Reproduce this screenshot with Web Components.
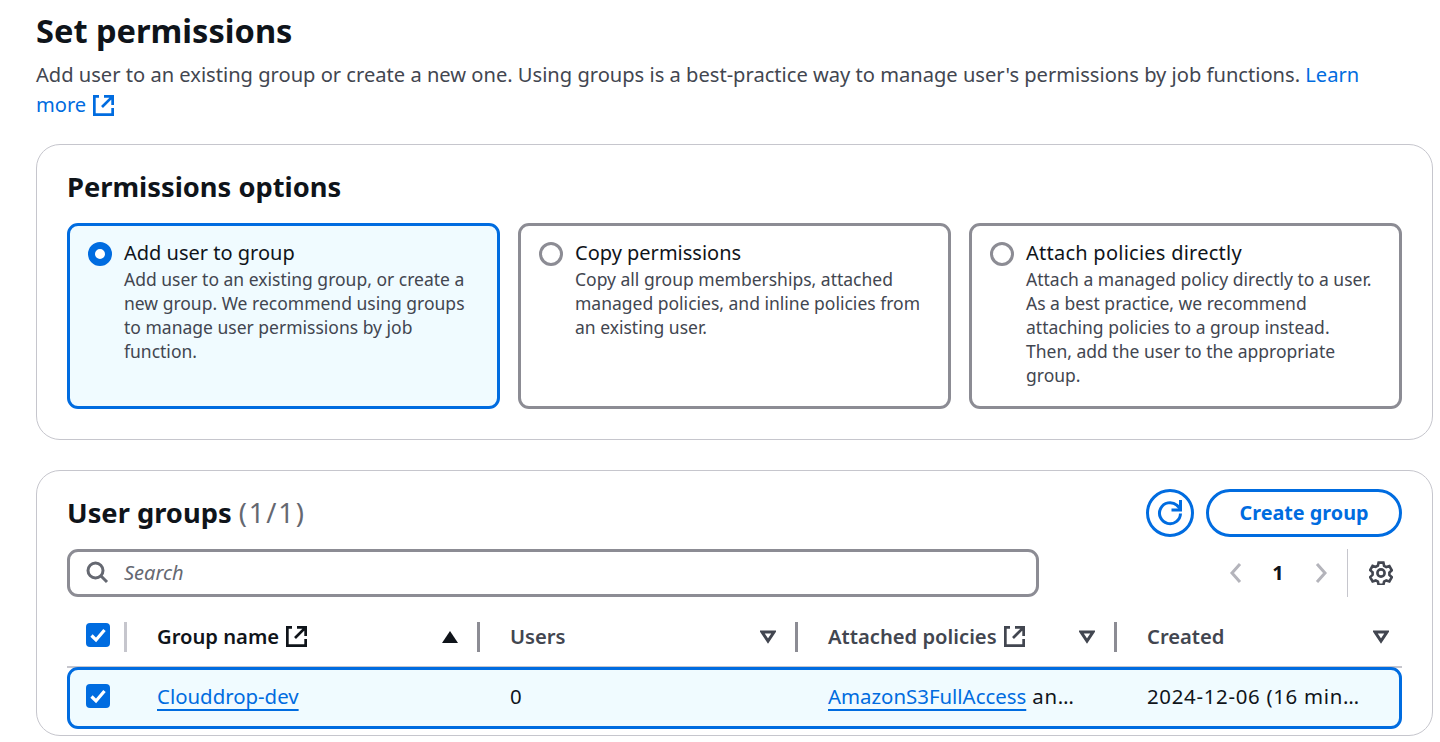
<!DOCTYPE html>
<html lang="en"><head><meta charset="utf-8"><title>Set permissions</title>
<style>
html,body{margin:0;padding:0;background:#fff;overflow:hidden}
body{font-family:"Noto Sans","Open Sans",sans-serif;color:#0f141a;height:742px}
</style></head><body>
<perm-page></perm-page>
<script>
const ext=(c)=>`<svg width="21" height="21" viewBox="0 0 21 21" fill="none" stroke="${c}" stroke-width="2.7"><path d="M6 1.35H1.35v18.3h18.3V13"/><path d="M11 1.35h8.65V10M19.65 1.35 9 12"/></svg>`;
function el(name,html){customElements.define(name,class extends HTMLElement{constructor(){super();this.attachShadow({mode:'open'}).innerHTML=html;}})}
el('aws-card',`<style>:host{display:block;box-sizing:border-box;border:1px solid #c6c6cd;border-radius:24px;background:#fff}</style><slot></slot>`);
el('aws-tile',`<style>
:host{display:flex;box-sizing:border-box;height:186px;border:3px solid #8c8c94;border-radius:11px;padding:13px 21px 0 18px;gap:12px;background:#fff}
:host([selected]){border-color:#006ce0;background:#f0fbff}
.r{flex:none;width:24px;height:24px;box-sizing:border-box;border-radius:50%;border:3px solid #8c8c94;background:#fff;margin-top:3px}
:host([selected]) .r{border:7px solid #006ce0}
.t{font-size:20px;line-height:28px}
.d{font-size:17.5px;line-height:24px;color:#424650}
</style><div class="r"></div><div><div class="t"><slot name="t"></slot></div><div class="d"><slot></slot></div></div>`);
el('aws-check',`<style>:host{display:block;flex:none;width:24px;height:24px}svg{display:block}</style><svg width="24" height="24" viewBox="0 0 24 24"><rect width="24" height="24" rx="4" fill="#006ce0"/><path d="M5.5 12.5 10 17l8.5-10" fill="none" stroke="#fff" stroke-width="3.2"/></svg>`);
el('col-head',`<style>
:host{display:flex;align-items:center;box-sizing:border-box;height:30px;border-left:3px solid #8c8c94;padding:0 19px 0 30px;font-weight:600;font-size:20.2px;color:#424650}
:host([active]){color:#0f141a;border-left:0;padding-left:32px}
:host([last]){padding-right:13px}
.n{display:flex;align-items:center;gap:7px;flex:1;white-space:nowrap;padding-bottom:2px}
</style><div class="n"><slot></slot></div><slot name="sort"></slot>`);
const down=`<svg slot="sort" width="16" height="14" viewBox="0 0 16 14"><path d="M2 2h12L8 11z" fill="none" stroke="#424650" stroke-width="3"/></svg>`;
el('perm-page',`<style>
:host{display:block;box-sizing:border-box;padding:0 7px 0 36px}
h1{margin:0;font-size:32.6px;line-height:42px;font-weight:700;padding-top:10px}
p{margin:0;font-size:20.12px;line-height:30px;color:#424650;padding-top:7px;height:61px;max-width:1340px}
a{color:#006ce0;text-decoration:none}
.lm svg{vertical-align:-4px;margin-left:2px}
.c1{margin-top:24px;height:296px}
h2{margin:0;font-size:27.3px;line-height:36px;font-weight:700}
.c1in{padding:24px 30px 0 30px}
.tiles{display:grid;grid-template-columns:repeat(3,433px);column-gap:18px;margin-top:18px}
.c2{margin-top:30px;height:266px;overflow:hidden}
.c2in{padding:0 30px}
.top{display:flex;align-items:center;height:84px}
.top h2{flex:1}
.top h2 span{font-weight:400;color:#656871;letter-spacing:1.9px}
.ref{box-sizing:border-box;width:48px;height:48px;border:3px solid #006ce0;border-radius:50%;display:flex;align-items:center;justify-content:center;margin-right:12px}
.btn{box-sizing:border-box;width:196px;height:48px;border:3px solid #006ce0;border-radius:24px;color:#006ce0;font-weight:700;font-size:19.8px;display:flex;align-items:center;justify-content:center;padding-bottom:2px}
.bar{display:flex;align-items:center;height:48px;margin-top:-6px}
.search{box-sizing:border-box;width:972px;height:48px;border:3px solid #8c8c94;border-radius:11px;display:flex;align-items:center;padding:0 0 2px 15px;gap:15px;font-style:italic;font-size:20px;color:#656871}
.pager{margin-left:auto;display:flex;align-items:center;margin-right:9px}
.num{font-weight:700;font-size:20px;width:28px;text-align:center;margin:0 21px 2px 20px}
.vl{width:1px;height:48px;background:#c6c6cd;margin:0 21px 0 18px}
svg{display:block}
.lm svg{display:inline-block}
.hd{display:grid;grid-template-columns:58px 352px 318px 319px 1fr;align-items:center;height:56px;padding-bottom:1px;margin-top:12px;border-bottom:2px solid #c6c6cd}
.cb{display:flex;align-items:center;padding-left:19px;gap:14px;box-sizing:border-box}
.cb aws-check{margin-top:-4px}
.cb i{display:block;flex:none;width:3px;height:30px;background:#c6c6cd}
.row{display:grid;grid-template-columns:55px 352px 318px 319px 1fr;align-items:center;box-sizing:border-box;height:62px;border:3px solid #006ce0;border-radius:11px;background:#f0fbff;font-size:20.4px;padding-bottom:4px;margin-top:-1px}
.row>div{padding-left:33px;white-space:nowrap;line-height:34px}
.row>div.g{padding-left:32px}
.row>.cb{padding:0 0 0 16px;margin-top:-1px}
.row>.cb aws-check{margin-top:0}
.row a{text-decoration:underline;text-decoration-thickness:2px;text-underline-offset:5px;text-decoration-skip-ink:none}
.sp{letter-spacing:.7px}
</style>
<h1>Set permissions</h1>
<p>Add user to an existing group or create a new one. Using groups is a best-practice way to manage user's permissions by job functions. <a href="#">Learn</a> <a class="lm" href="#">more ${ext('#006ce0')}</a></p>
<aws-card class="c1"><div class="c1in"><h2>Permissions options</h2>
<div class="tiles">
<aws-tile selected><span slot="t">Add user to group</span>Add user to an existing group, or create a new group. We recommend using groups to manage user permissions by job function.</aws-tile>
<aws-tile><span slot="t">Copy permissions</span>Copy all group memberships, attached managed policies, and inline policies from an existing user.</aws-tile>
<aws-tile><span slot="t" style="letter-spacing:.25px">Attach policies directly</span>Attach a managed policy directly to a user. As a best practice, we recommend attaching policies to a group instead. Then, add the user to the appropriate group.</aws-tile>
</div></div></aws-card>
<aws-card class="c2"><div class="c2in">
<div class="top"><h2>User groups <span>(1/1)</span></h2>
<div class="ref"><svg width="26" height="26" viewBox="0 0 26 26" fill="none" stroke="#006ce0" stroke-width="3"><path d="M23.5 13.5a10.5 10.5 0 1 1-3.7-8.3L24 9.5"/><path d="M23.5 0v10h-9"/></svg></div>
<div class="btn">Create group</div></div>
<div class="bar"><div class="search"><svg width="24" height="24" viewBox="0 0 24 24" fill="none" stroke="#656871" stroke-width="3"><circle cx="10.5" cy="10.5" r="7.5"/><path d="m16 16 6 6"/></svg>Search</div>
<div class="pager"><svg width="16" height="24" viewBox="0 0 16 24" fill="none" stroke="#b4b4bb" stroke-width="3"><path d="M12 3 4 12l8 9"/></svg><span class="num">1</span><svg width="16" height="24" viewBox="0 0 16 24" fill="none" stroke="#b4b4bb" stroke-width="3"><path d="m4 3 8 9-8 9"/></svg><span class="vl"></span><svg width="24" height="24" viewBox="0 0 24 24" fill="none" stroke="#424650" stroke-width="2.6"><circle cx="12" cy="12" r="3.6"/><path d="M9.6 1.6h4.8l.7 3.2 2.2 1.3 3.1-1 2.4 4.2-2.4 2.2v2.5l2.4 2.2-2.4 4.2-3.1-1-2.2 1.3-.7 3.2H9.6l-.7-3.2-2.2-1.3-3.1 1-2.4-4.2L3.6 13.8v-2.5L1.2 9.1l2.4-4.2 3.1 1 2.2-1.3z"/></svg></div></div>
<div class="hd"><div class="cb"><aws-check></aws-check><i></i></div>
<col-head active>Group name ${ext('#0f141a')}<svg slot="sort" width="16" height="14" viewBox="0 0 16 14"><path d="M8 1 16 13H0z" fill="#0f141a"/></svg></col-head>
<col-head>Users${down}</col-head>
<col-head>Attached policies ${ext('#424650')}${down}</col-head>
<col-head last>Created${down}</col-head>
</div>
<div class="row"><div class="cb"><aws-check></aws-check></div><div class="g"><a href="#">Clouddrop-dev</a></div><div>0</div><div><a href="#">AmazonS3FullAccess</a><span class="sp"> an…</span></div><div class="sp">2024-12-06 (16 min…</div></div>
</div></aws-card>`);
</script></body></html>
